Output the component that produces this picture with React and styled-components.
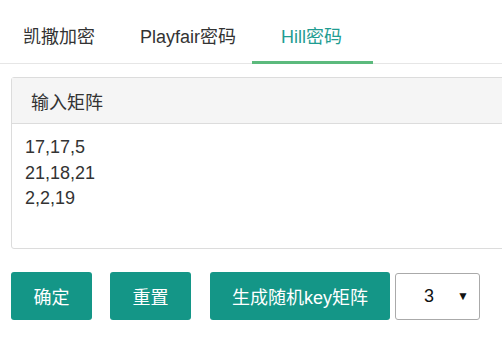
import React, { useState } from 'react';
import styled, { createGlobalStyle } from 'styled-components';

const GlobalStyle = createGlobalStyle`
  html, body {
    margin: 0;
    padding: 0;
    background: #fff;
  }
  body {
    font-family: 'Liberation Sans', 'Noto Sans CJK SC', sans-serif;
    color: #333;
  }
`;

const Page = styled.div`
  width: 502px;
  height: 341px;
  overflow: hidden;
`;

const TabBar = styled.div`
  display: flex;
  height: 63px;
  border-bottom: 1px solid #e6e6e6;
`;

const Tab = styled.div`
  position: relative;
  padding: 25px ${(p) => p.pad ?? 23}px 0;
  font-size: 18px;
  line-height: 24px;
  color: ${(p) => (p.active ? '#1f9d92' : '#333')};
  cursor: pointer;

  &::after {
    content: '';
    display: ${(p) => (p.active ? 'block' : 'none')};
    position: absolute;
    left: -6px;
    right: -8px;
    bottom: -1px;
    height: 3px;
    background: #5cba7d;
  }
`;

const Panel = styled.div`
  margin: 13px 0 0 11px;
  width: 520px;
  border: 1px solid #dcdcdc;
  border-radius: 3px;
`;

const PanelHeader = styled.div`
  height: 45px;
  padding-left: 19px;
  display: flex;
  align-items: center;
  background: #f5f5f5;
  border-bottom: 1px solid #dcdcdc;
  font-size: 18px;
`;

const Matrix = styled.textarea`
  display: block;
  box-sizing: border-box;
  width: 100%;
  height: 124px;
  margin: 0;
  padding: 11px 13px 0;
  border: none;
  resize: none;
  outline: none;
  font-family: 'Liberation Sans', 'Noto Sans CJK SC', sans-serif;
  font-size: 18px;
  line-height: 25.5px;
  color: #333;
  background: transparent;
`;

const Actions = styled.div`
  display: flex;
  align-items: center;
  margin: 23px 0 0 11px;
`;

const Button = styled.button`
  width: ${(p) => p.w}px;
  height: 48px;
  padding: 0;
  margin-right: ${(p) => p.gap ?? 18}px;
  border: none;
  border-radius: 3px;
  background: #149687;
  color: #fff;
  font-family: 'Liberation Sans', 'Noto Sans CJK SC', sans-serif;
  font-size: 18px;
  cursor: pointer;
`;

const Select = styled.div`
  box-sizing: border-box;
  width: 85px;
  height: 47px;
  display: flex;
  align-items: center;
  padding: 0 10px 0 28px;
  border: 1px solid #aaa;
  border-radius: 3px;
  font-size: 18px;
  color: #111;

  & span {
    flex: 1;
  }

  & i {
    font-style: normal;
    font-size: 12px;
  }
`;

const tabs = ['凯撒加密', 'Playfair密码', 'Hill密码'];

const App = () => {
  const [active, setActive] = useState(2);
  const [matrix, setMatrix] = useState('17,17,5\n21,18,21\n2,2,19');

  return (
    <Page>
      <GlobalStyle />
      <TabBar>
        {tabs.map((t, i) => (
          <Tab
            key={t}
            active={i === active}
            pad={i === 1 ? 22 : 23}
            onClick={() => setActive(i)}
          >
            {t}
          </Tab>
        ))}
      </TabBar>
      <Panel>
        <PanelHeader>输入矩阵</PanelHeader>
        <Matrix value={matrix} onChange={(e) => setMatrix(e.target.value)} />
      </Panel>
      <Actions>
        <Button w={81}>确定</Button>
        <Button w={81} gap={19}>重置</Button>
        <Button w={180} gap={5}>生成随机key矩阵</Button>
        <Select>
          <span>3</span>
          <i>▼</i>
        </Select>
      </Actions>
    </Page>
  );
};

export default App;
